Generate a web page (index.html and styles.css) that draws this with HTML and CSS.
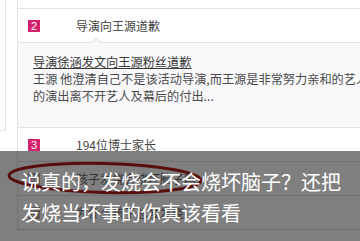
FILE: index.html
```html
<!DOCTYPE html>
<html lang="zh-CN">
<head>
<meta charset="utf-8">
<link rel="stylesheet" href="styles.css">
</head>
<body>
<div class="page">
  <div class="side"></div>
  <div class="list">
    <div class="row prev"></div>
    <div class="row"><span class="badge">2</span><span class="title">导演向王源道歉</span></div>
    <div class="detail">
      <a class="dtitle">导演徐涵发文向王源粉丝道歉</a>
      <p class="dtext">王源 他澄清自己不是该活动导演,而王源是非常努力亲和的艺人<br>的演出离不开艺人及幕后的付出...</p>
    </div>
    <div class="row"><span class="badge">3</span><span class="title">194位博士家长</span></div>
    <div class="row"><span class="badge grey">4</span><span class="title under">孩子发烧会烧坏脑子吗</span></div>
    <div class="row dotted"><span class="badge grey">5</span><span class="title under">为什么孩子总爱发烧</span></div>
  </div>
  <svg class="circle" width="210" height="40" viewBox="0 0 210 40">
    <ellipse cx="104" cy="20" rx="96" ry="14.5" fill="none" stroke="#b31c1c" stroke-width="3" transform="rotate(1.5 104 20)"/>
  </svg>
  <div class="caption">说真的，发烧会不会烧坏脑子？还把<br>发烧当坏事的你真该看看</div>
</div>
</body>
</html>
```

FILE: styles.css
```css
html, body {
  margin: 0;
  padding: 0;
  background: #fff;
}
body {
  font-family: "Noto Sans CJK SC", "Noto Sans", sans-serif;
  overflow: hidden;
}
.page {
  position: relative;
  width: 360px;
  height: 241px;
  overflow: hidden;
  display: flex;
  align-items: flex-start;
}
.side {
  flex: none;
  width: 5px;
  height: 130px;
  border-right: 1px solid #e6e6e6;
  border-bottom: 1px solid #e6e6e6;
}
.list {
  flex: none;
  width: 400px;
  margin-left: 11px;
  border-left: 1px solid #e4e4e4;
  display: flex;
  flex-direction: column;
}
.row {
  height: 33px;
  border-bottom: 1px solid #e2e2e2;
  display: flex;
  align-items: center;
}
.row.prev {
  height: 8px;
}
.row.dotted {
  border-bottom: 1px dotted #bdbdbd;
}
.badge {
  flex: none;
  width: 12px;
  height: 12px;
  margin-left: 10px;
  background: #d3216c;
  color: #fff;
  font-family: "Liberation Sans", sans-serif;
  font-size: 11px;
  line-height: 12px;
  text-align: center;
}
.badge.grey {
  background: #b0b0b0;
}
.title {
  margin-left: 36px;
  font-size: 12px;
  line-height: 17px;
  color: #444;
  white-space: nowrap;
}
.title.under {
  color: #666;
}
.detail {
  position: relative;
  height: 73px;
  padding: 11px 0 0 15px;
  background: #f9f9fb;
  border-bottom: 1px solid #e2e2e2;
}
.detail::before {
  content: "";
  position: absolute;
  left: 75px;
  top: -4px;
  width: 6px;
  height: 6px;
  background: #f9f9fb;
  border-left: 1px solid #e2e2e2;
  border-top: 1px solid #e2e2e2;
  transform: rotate(45deg);
}
.dtitle {
  display: block;
  font-size: 12.2px;
  line-height: 17px;
  color: #3a3a3a;
  text-decoration: underline;
  white-space: nowrap;
}
.dtext {
  margin: 0;
  font-size: 12.2px;
  line-height: 17px;
  color: #4a4a4a;
  white-space: nowrap;
}
.circle {
  position: absolute;
  left: 1px;
  top: 158px;
}
.caption {
  position: absolute;
  left: 0;
  right: 0;
  bottom: 0;
  height: 75px;
  padding: 15px 0 0 21px;
  background: rgba(0, 0, 0, 0.5);
  color: #fff;
  font-size: 20px;
  line-height: 31px;
  white-space: nowrap;
}
```
